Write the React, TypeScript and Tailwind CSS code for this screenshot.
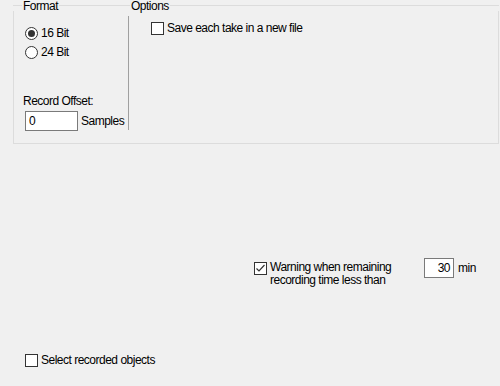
import React from "react";

const font = { fontFamily: '"Liberation Sans", Arial, sans-serif' };

const Check = ({ checked = false }: { checked?: boolean }) => (
  <span className="w-[13px] h-[13px] shrink-0 border border-[#333333] bg-white flex items-center justify-center">
    {checked && (
      <svg width="11" height="11" viewBox="0 0 11 11">
        <polyline points="1.5,5.5 4,8 9.5,2" fill="none" stroke="#333333" strokeWidth="1.2" />
      </svg>
    )}
  </span>
);

const Radio = ({ checked = false }: { checked?: boolean }) => (
  <span className="w-[13px] h-[13px] shrink-0 rounded-full border border-[#333333] bg-white flex items-center justify-center">
    {checked && <span className="w-[7px] h-[7px] rounded-full bg-[#333333]" />}
  </span>
);

export default function App() {
  return (
    <div className="w-[500px] h-[386px] bg-[#f0f0f0] overflow-hidden text-[12px] leading-[13px] tracking-[-0.5px] text-black whitespace-nowrap" style={font}>
      {/* group box */}
      <div className="ml-[13px] w-[486px]">
        <div className="flex items-start h-[11px]">
          <div className="w-[116px] flex items-start">
            <span className="w-[9px] mt-[5px] border-t border-[#dcdcdc]" />
            <span className="px-[1px] h-[13px]">Format</span>
            <span className="flex-1 mt-[5px] border-t border-[#dcdcdc]" />
          </div>
          <div className="flex-1 flex items-start">
            <span className="w-[1px] mt-[5px] border-t border-[#dcdcdc]" />
            <span className="px-[1px] h-[13px]">Options</span>
            <span className="flex-1 mt-[5px] border-t border-[#dcdcdc]" />
          </div>
        </div>
        <div className="h-[133px] border-l border-r border-b border-[#dcdcdc] flex">
          <div className="w-[114px] pl-[11px] pt-[16px] flex flex-col">
            <div className="flex items-center gap-[3px] h-[13px]">
              <Radio checked />
              <span>16 Bit</span>
            </div>
            <div className="flex items-center gap-[3px] h-[13px] mt-[6px]">
              <Radio />
              <span>24 Bit</span>
            </div>
            <div className="mt-[36px] -ml-[2px] h-[13px]">Record Offset:</div>
            <div className="flex items-center mt-[3px] gap-[3px]">
              <div className="w-[53px] h-[20px] border border-[#7a7a7a] bg-white pl-[3px] flex items-center">0</div>
              <span>Samples</span>
            </div>
          </div>
          <div className="w-px h-[114px] mt-[5px] bg-[#a0a0a0]" />
          <div className="flex-1 pl-[22px] pt-[11px]">
            <div className="flex items-center gap-[3px] h-[13px]">
              <Check />
              <span>Save each take in a new file</span>
            </div>
          </div>
        </div>
      </div>

      {/* warning row */}
      <div className="mt-[114px] pl-[254px] flex items-start h-[26px]">
        <div className="mt-[4px]">
          <Check checked />
        </div>
        <div className="w-[157px] pl-[3px] mt-[3px] leading-[13px]">
          Warning when remaining
          <br />
          recording time less than
        </div>
        <div className="w-[30px] h-[20px] border border-[#7a7a7a] bg-white flex items-center justify-end pr-[3px]">30</div>
        <span className="ml-[4px] mt-[4px]">min</span>
      </div>

      {/* select row */}
      <div className="mt-[70px] pl-[25px] flex items-center gap-[3px] h-[13px]">
        <Check />
        <span>Select recorded objects</span>
      </div>
    </div>
  );
}
